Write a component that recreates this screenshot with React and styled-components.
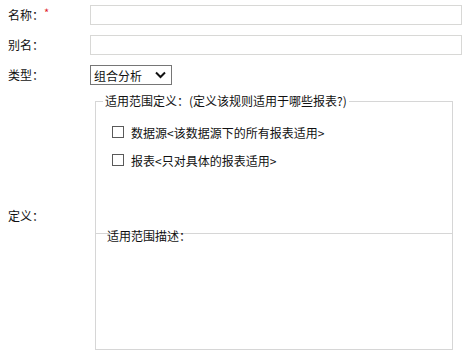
import styled, { createGlobalStyle } from "styled-components";

const Global = createGlobalStyle`
  body {
    margin: 0;
    background: #fff;
    font-family: "Noto Sans CJK SC", "Noto Sans", sans-serif;
    font-size: 12px;
    color: #111;
  }
`;

const Form = styled.div`
  display: grid;
  grid-template-columns: 82px 1fr;
  row-gap: 10px;
  padding: 5px 4px 0 8px;
  width: 466px;
  box-sizing: border-box;
`;

const Label = styled.div`
  display: flex;
  align-items: center;
  line-height: 16px;
  white-space: nowrap;
  ${(p) => p.$offset && `align-self: start; padding-top: ${p.$offset}px;`}
`;

const Star = styled.span`
  color: #e0202a;
  font-size: 11px;
  position: relative;
  top: -3px;
`;

const TextInput = styled.input`
  box-sizing: border-box;
  width: 100%;
  height: 20px;
  margin: 0;
  border: 1px solid #d8d8d6;
  outline: none;
  padding: 0 4px;
  font: inherit;
`;

const SelectWrap = styled.div`
  position: relative;
  width: 82px;
  height: 20px;

  svg {
    position: absolute;
    right: 6px;
    top: 6px;
    pointer-events: none;
  }
`;

const Select = styled.select`
  appearance: none;
  box-sizing: border-box;
  width: 100%;
  height: 20px;
  margin: 0;
  border: 1px solid #767676;
  border-radius: 0;
  background: #fff;
  padding: 0 0 0 3px;
  font: inherit;
  font-size: 12px;
  color: #111;
`;

const Definition = styled.div`
  margin: -2px 0 0 5px;
  width: 358px;
`;

const Scope = styled.fieldset`
  margin: 0;
  padding: 0 16px 63px;
  border: 1px solid #d6d6d6;
`;

const Legend = styled.legend`
  padding: 0 2px;
  margin-left: -9px;
  line-height: 16px;
`;

const Options = styled.div`
  display: flex;
  flex-direction: column;
  gap: 8px;
  padding-top: 13px;
`;

const Option = styled.label`
  display: flex;
  align-items: center;
  height: 20px;
  gap: 7px;
  white-space: nowrap;
`;

const Box = styled.input`
  appearance: none;
  width: 12px;
  height: 12px;
  margin: 0;
  border: 1px solid #5a5a5a;
  background: #fff;
`;

const Describe = styled.div`
  height: 122px;
  box-sizing: border-box;
  border: 1px solid #d6d6d6;
  border-top: none;
`;

const DescTitle = styled.div`
  margin-top: -6px;
  padding-left: 11px;
  line-height: 16px;
`;

export default function App() {
  return (
    <>
      <Global />
      <Form>
        <Label>
          名称：<Star>*</Star>
        </Label>
        <TextInput type="text" />

        <Label>别名：</Label>
        <TextInput type="text" />

        <Label>类型：</Label>
        <SelectWrap>
          <Select defaultValue="组合分析">
            <option>组合分析</option>
          </Select>
          <svg width="11" height="8" viewBox="0 0 11 8">
            <path d="M1 1.5 L5.5 6 L10 1.5" fill="none" stroke="#111" strokeWidth="2" />
          </svg>
        </SelectWrap>

        <Label $offset={113}>定义：</Label>
        <Definition>
          <Scope>
            <Legend>适用范围定义：(定义该规则适用于哪些报表?)</Legend>
            <Options>
              <Option>
                <Box type="checkbox" />
                数据源&lt;该数据源下的所有报表适用&gt;
              </Option>
              <Option>
                <Box type="checkbox" />
                报表&lt;只对具体的报表适用&gt;
              </Option>
            </Options>
          </Scope>
          <Describe>
            <DescTitle>适用范围描述：</DescTitle>
          </Describe>
        </Definition>
      </Form>
    </>
  );
}
